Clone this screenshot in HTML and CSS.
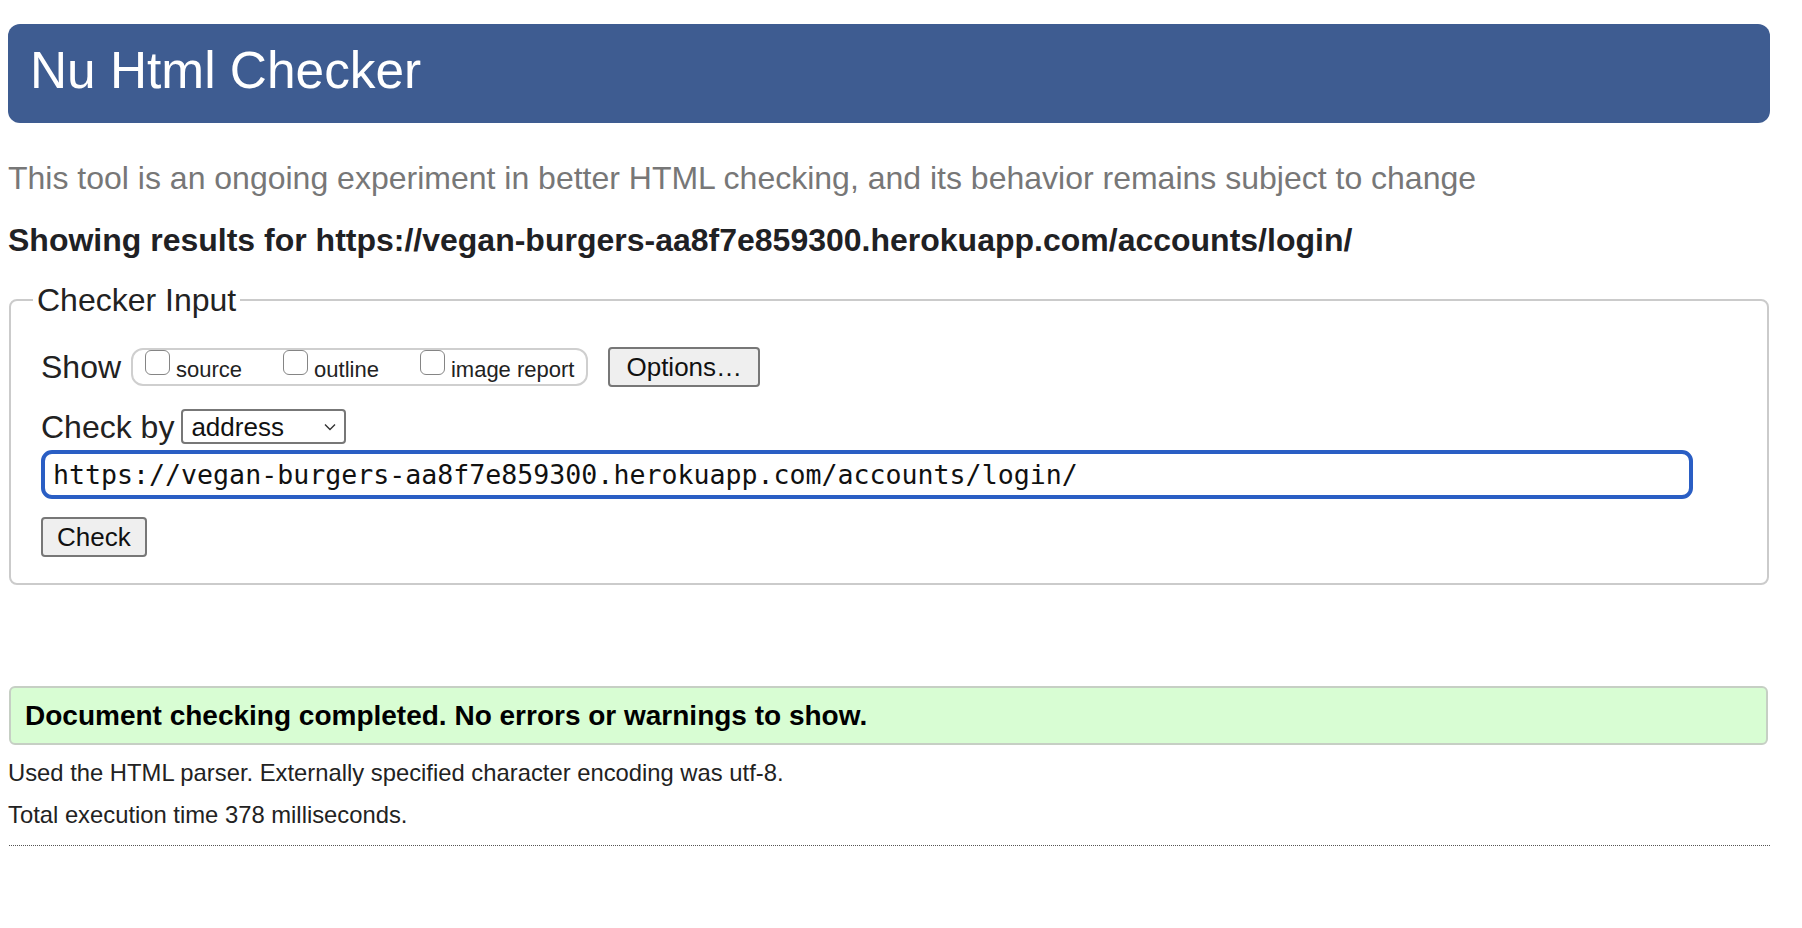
FILE: index.html
```html
<!DOCTYPE html>
<html lang="en">
<head>
<meta charset="utf-8">
<title>Nu Html Checker</title>
<link rel="stylesheet" href="styles.css">
</head>
<body>
<div class="page">
  <h1 class="title">Nu Html Checker</h1>
  <p class="subtitle">This tool is an ongoing experiment in better HTML checking, and its behavior remains subject to change</p>
  <h2 class="results-for">Showing results for https://vegan-burgers-aa8f7e859300.herokuapp.com/accounts/login/</h2>
  <form class="checker">
    <fieldset class="fs">
      <legend class="fs-legend">Checker Input</legend>
      <div class="fields">
        <div class="show-row">
          <span class="row-label">Show</span>
          <div class="show-group">
            <label class="cb"><input type="checkbox" class="cb-box"><span class="cb-text">source</span></label>
            <label class="cb"><input type="checkbox" class="cb-box"><span class="cb-text">outline</span></label>
            <label class="cb"><input type="checkbox" class="cb-box"><span class="cb-text">image report</span></label>
          </div>
          <button type="button" class="btn btn-options">Options…</button>
        </div>
        <div class="by-row">
          <span class="row-label">Check by</span>
          <div class="select-wrap">
            <select class="select"><option>address</option></select>
            <svg class="chevron" width="12" height="8" viewBox="0 0 12 8"><polyline points="1,1.5 6,6.5 11,1.5" fill="none" stroke="#333" stroke-width="1.4"/></svg>
          </div>
        </div>
        <div class="url-row">
          <input class="url" type="text" value="https://vegan-burgers-aa8f7e859300.herokuapp.com/accounts/login/">
        </div>
        <div class="check-row">
          <button type="button" class="btn btn-check">Check</button>
        </div>
      </div>
    </fieldset>
  </form>
  <p class="success">Document checking completed. No errors or warnings to show.</p>
  <p class="info">Used the HTML parser. Externally specified character encoding was utf-8.</p>
  <p class="info">Total execution time 378 milliseconds.</p>
  <hr class="dots">
</div>
</body>
</html>
```

FILE: styles.css
```css
html, body {
  margin: 0;
  padding: 0;
  background: #fff;
}

body {
  font-family: "Liberation Sans", Arial, Helvetica, sans-serif;
  color: #222;
}

.page {
  padding: 24px 32px 40px 8px;
}

.title {
  margin: 0;
  height: 99px;
  box-sizing: border-box;
  display: flex;
  align-items: center;
  padding: 0 0 5px 22px;
  background: #3e5c91;
  color: #fff;
  border-radius: 12px;
  font-size: 51.4px;
  font-weight: normal;
  line-height: 1;
}

.subtitle {
  margin: 35px 0 0 0;
  font-size: 32px;
  line-height: 40px;
  color: #777;
}

.results-for {
  margin: 22px 0 0 0;
  font-size: 32px;
  line-height: 40px;
  font-weight: bold;
  color: #1f2124;
}

.checker {
  margin: 20px 1px 0 1px;
}

.fs {
  margin: 0;
  padding: 0 0 26px 22px;
  border: 2px solid #cbcbcb;
  border-radius: 8px;
}

.fs-legend {
  padding: 0 4px;
  font-size: 32px;
  line-height: 40px;
  color: #222;
}

.fields {
  padding-left: 8px;
  padding-top: 27px;
}

.row-label {
  font-size: 32px;
  line-height: 40px;
  color: #222;
}

.show-row {
  display: flex;
  align-items: center;
  height: 40px;
}

.show-group {
  display: flex;
  align-items: flex-start;
  gap: 41px;
  height: 38px;
  box-sizing: border-box;
  margin-left: 10px;
  padding: 0 12px 0 12px;
  border: 2px solid #cfcfcf;
  border-radius: 12px;
}

.cb {
  display: flex;
  align-items: flex-end;
  gap: 6px;
}

.cb-box {
  appearance: none;
  -webkit-appearance: none;
  width: 25px;
  height: 25px;
  margin: 0 0 6px 0;
  box-sizing: border-box;
  border: 1.5px solid #858585;
  border-radius: 6px;
  background: #fff;
}

.cb-text {
  font-size: 22px;
  line-height: 22px;
  color: #222;
}

.btn {
  height: 40px;
  box-sizing: border-box;
  margin: 0;
  border: 2px solid #777;
  border-radius: 4px;
  background: #efefef;
  font-family: "Liberation Sans", Arial, Helvetica, sans-serif;
  font-size: 26px;
  color: #111;
  line-height: 1;
}

.btn-options {
  margin-left: 20px;
  padding: 0 16px;
}

.by-row {
  display: flex;
  align-items: center;
  margin-top: 22px;
  height: 35px;
}

.select-wrap {
  position: relative;
  margin-left: 7px;
}

.select {
  appearance: none;
  -webkit-appearance: none;
  display: block;
  width: 165px;
  height: 35px;
  box-sizing: border-box;
  margin: 0;
  padding: 0 0 0 8px;
  border: 2px solid #777;
  border-radius: 4px;
  background: #fff;
  font-family: "Liberation Sans", Arial, Helvetica, sans-serif;
  font-size: 26px;
  color: #111;
}

.chevron {
  position: absolute;
  right: 10px;
  top: 14px;
}

.url-row {
  margin-top: 6px;
}

.url {
  display: block;
  width: 1652px;
  height: 49px;
  box-sizing: border-box;
  margin: 0;
  padding: 0 0 0 8px;
  border: 4px solid #2a5ec4;
  border-radius: 11px;
  outline: none;
  font-family: "DejaVu Sans Mono", Menlo, monospace;
  font-size: 26.6px;
  color: #111;
  background: #fff;
}

.check-row {
  margin-top: 18px;
}

.btn-check {
  padding: 0 14px;
}

.success {
  margin: 101px 2px 0 1px;
  height: 59px;
  box-sizing: border-box;
  display: flex;
  align-items: center;
  padding: 0 0 0 14px;
  background: #d8fdd3;
  border: 2px solid #c6cfc4;
  border-radius: 6px;
  font-size: 28px;
  font-weight: bold;
  color: #000;
}

.info {
  margin: 0;
  font-size: 23.8px;
  line-height: 42px;
  color: #222;
}

.success + .info {
  margin-top: 7px;
}

.dots {
  margin: 9px 0 0 1px;
  height: 0;
  border: 0;
  border-top: 1px dotted #555;
}
```
